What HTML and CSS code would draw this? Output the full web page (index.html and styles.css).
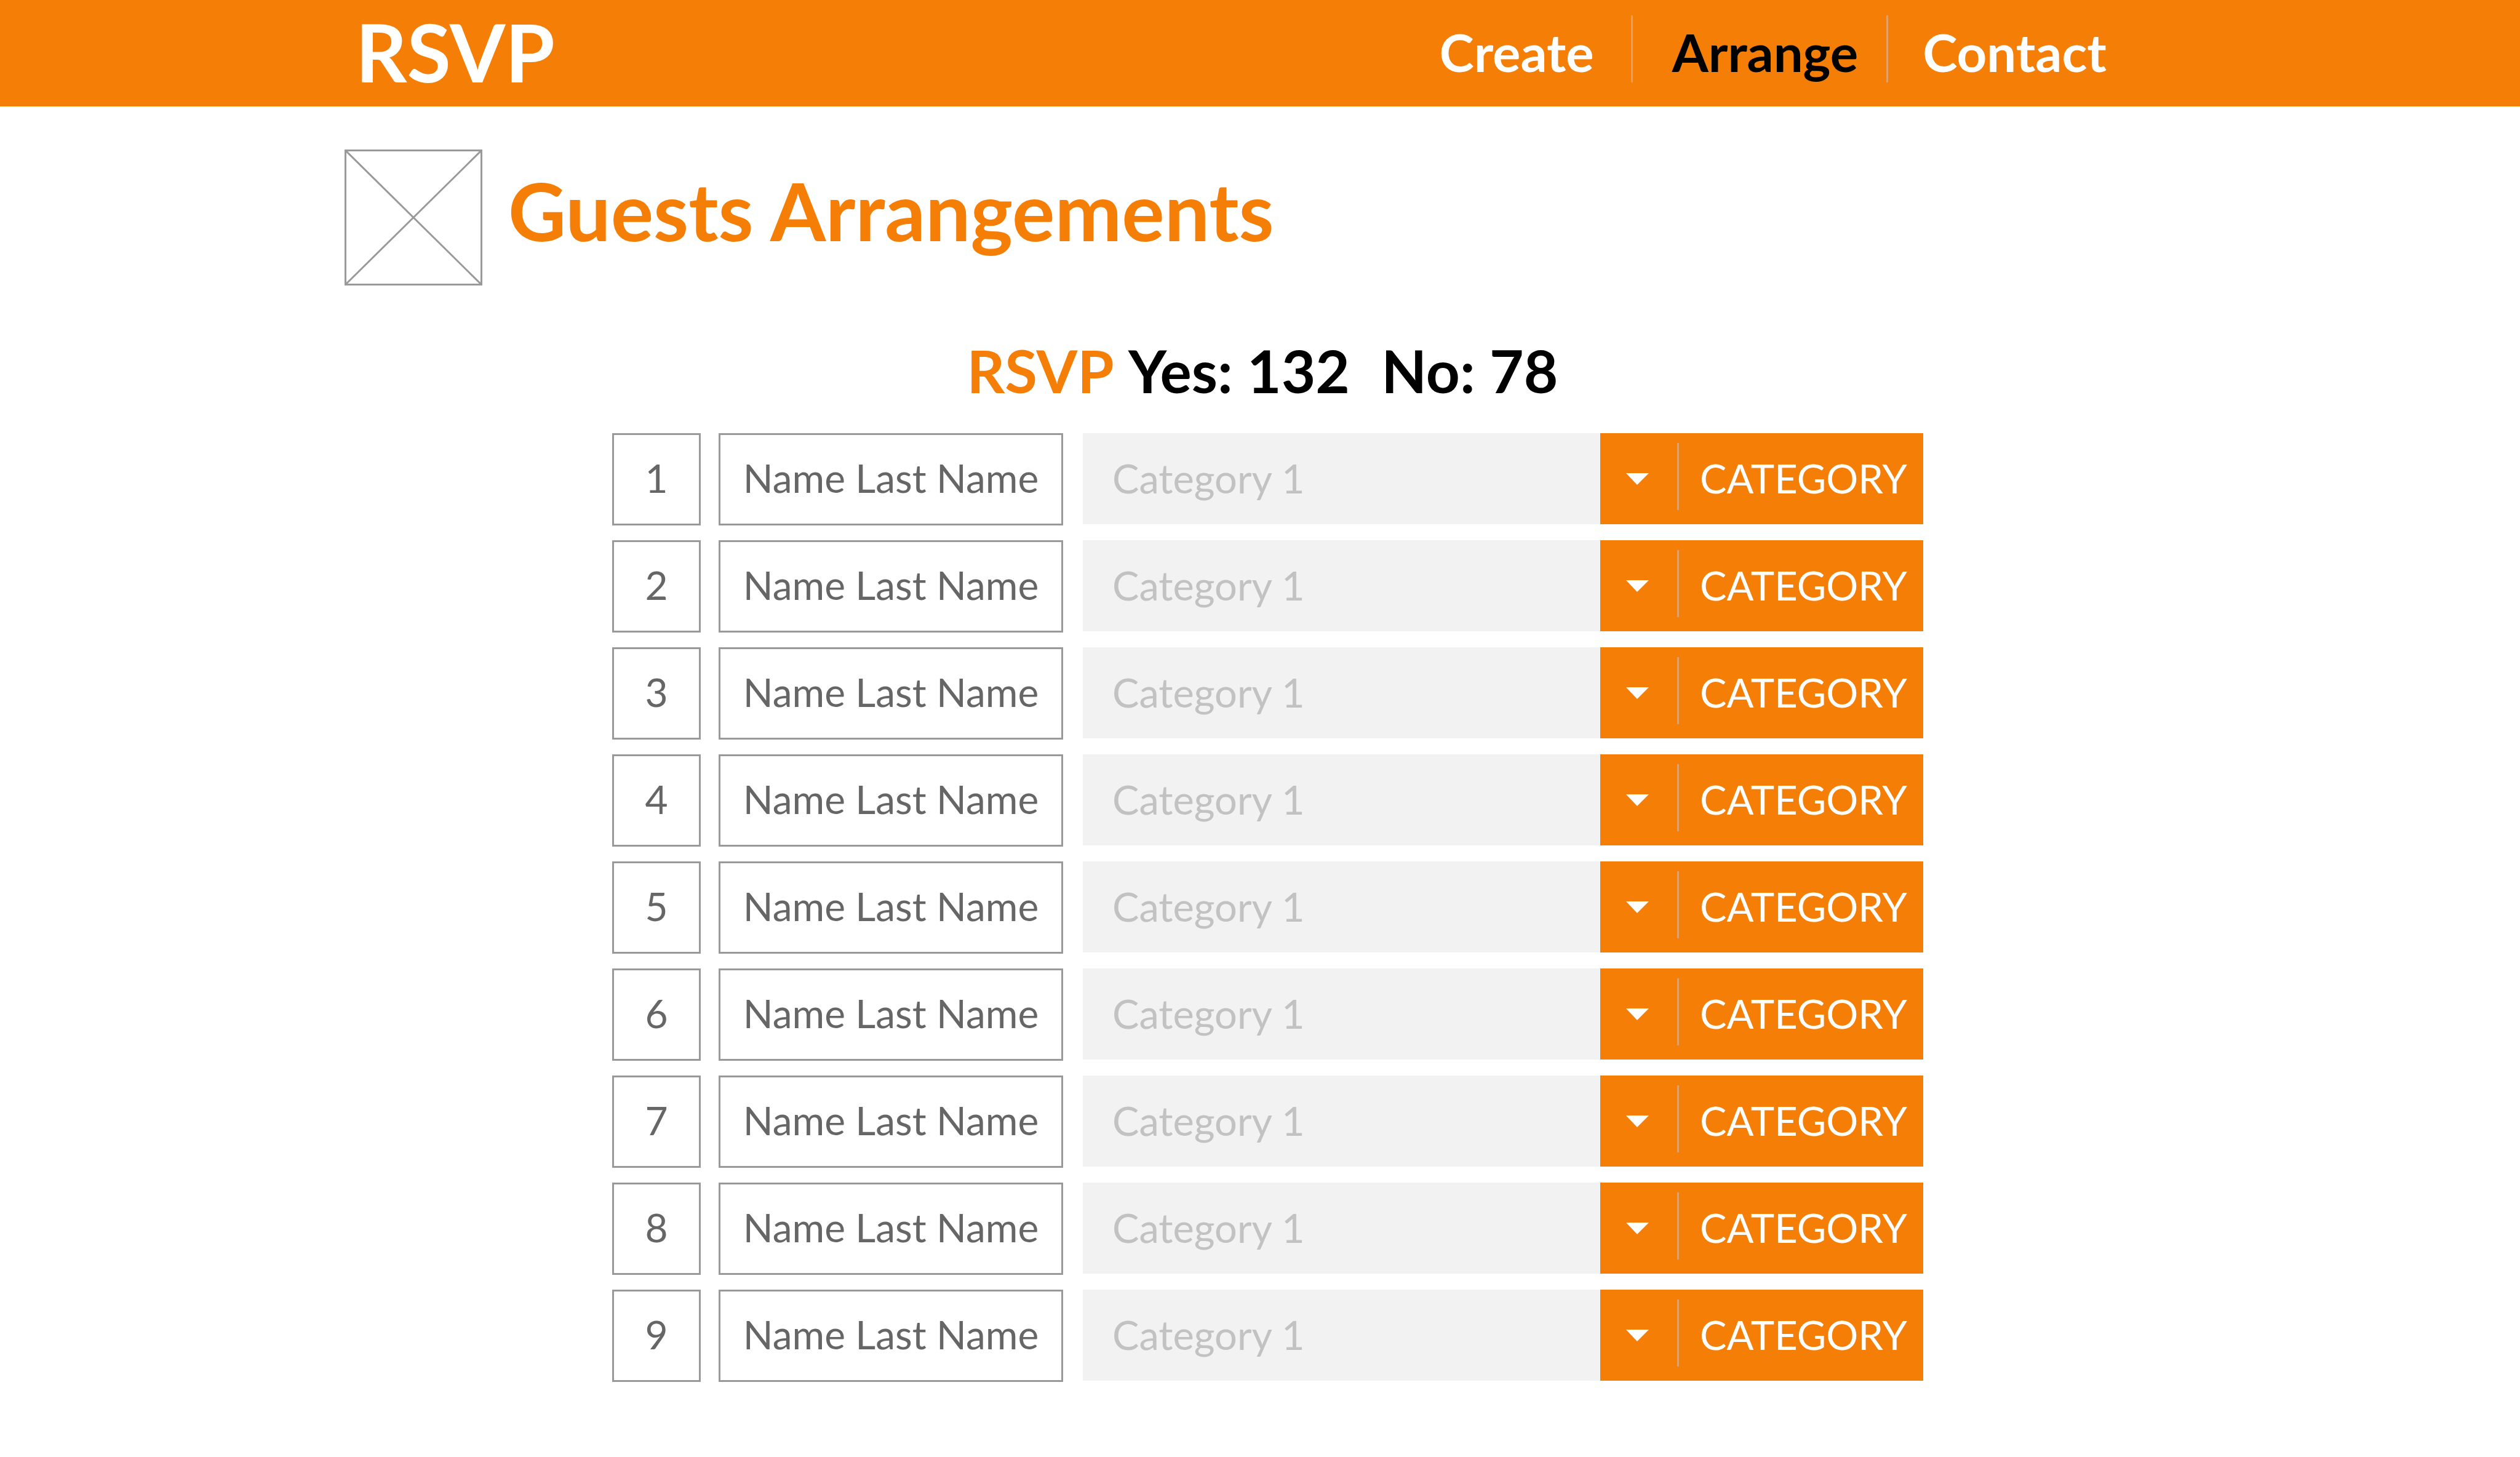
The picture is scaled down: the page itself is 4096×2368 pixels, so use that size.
FILE: index.html
```html
<!DOCTYPE html>
<html lang="en">
<head>
<meta charset="utf-8">
<meta name="viewport" content="width=device-width, initial-scale=1">
<title>RSVP – Guests Arrangements</title>
<link rel="stylesheet" href="styles.css">
</head>
<body>
<header class="topbar">
  <div class="container topbar-inner">
    <a class="logo" href="#">RSVP</a>
    <nav aria-label="Main">
      <ul class="nav">
        <li class="nav-item"><a href="#create">Create</a></li>
        <li class="nav-item nav-item-current"><a href="#arrange" aria-current="page">Arrange</a></li>
        <li class="nav-item"><a href="#contact">Contact</a></li>
      </ul>
    </nav>
  </div>
</header>
<main class="container main">
  <div class="title">
    <svg class="title-image" viewBox="0 0 224 221" aria-hidden="true">
      <rect x="1.5" y="1.5" width="221" height="218"/>
      <path d="M2 2L222 219M222 2L2 219"/>
    </svg>
    <h1>Guests Arrangements</h1>
  </div>
  <p class="summary"><span class="summary-brand">RSVP</span> Yes: 132 <span class="summary-no">No: 78</span></p>
  <ol class="guests" id="guests"></ol>
</main>
<template id="guest-row">
  <li class="guest">
    <span class="guest-number"></span>
    <span class="guest-name">Name Last Name</span>
    <div class="picker">
      <input class="picker-field" type="text" placeholder="Category 1">
      <button class="picker-button" type="button">
        <svg class="picker-arrow" viewBox="0 0 37 19" aria-hidden="true"><path d="M0 0H37L18 19Z"/></svg>
        <span class="picker-label">CATEGORY</span>
      </button>
    </div>
  </li>
</template>
<script src="guests.js"></script>
</body>
</html>
```
FILE: guests.js
```js
const list = document.getElementById('guests');
const template = document.getElementById('guest-row');

for (let n = 1; n <= 9; n++) {
  const row = template.content.cloneNode(true);
  row.querySelector('.guest-number').textContent = n;
  row.querySelector('.guest-name').id = 'guest-' + n;
  row.querySelector('.picker-field').setAttribute('aria-labelledby', 'guest-' + n);
  list.append(row);
}
```
FILE: styles.css
```css
:root {
  --orange: #f57e07;
  --divider: #e5a066;
  --line: #999;
  --text: #666;
}

* {
  box-sizing: border-box;
}

body {
  margin: 0;
  background: #fff;
  color: #000;
  font-family: Lato, sans-serif;
  font-size: 64px;
}

.container {
  max-width: 2976px;
  margin: 0 auto;
}

/* Top bar */
.topbar {
  background: var(--orange);
  padding: 25px 0 30px;
}

.topbar-inner {
  display: flex;
  justify-content: space-between;
  padding: 0 112px 0 18px;
  font-weight: 700;
  line-height: 118px;
}

.logo {
  color: #fff;
  font-size: 130px;
  text-decoration: none;
}

.nav {
  display: flex;
  margin: 0;
  padding: 0;
  list-style: none;
  font-size: 85px;
}

.nav-item {
  height: 109px;
}

.nav-item a {
  color: #fff;
  text-decoration: none;
}

.nav-item-current {
  margin: 0 56px 0 60px;
  padding: 0 46px 0 64px;
  border: solid var(--divider);
  border-width: 0 3px;
}

.nav-item-current a {
  color: #000;
}

/* Page title */
.main {
  padding: 70px 0;
}

.title {
  display: flex;
  align-items: center;
  gap: 42px;
}

.title-image {
  flex: none;
  width: 224px;
  height: 221px;
  fill: none;
  stroke: var(--line);
  stroke-width: 3;
}

.title h1 {
  margin: 0;
  padding-bottom: 24px;
  color: var(--orange);
  font-size: 130px;
  line-height: 154px;
}

.summary {
  margin: 80px 0 44px;
  padding-left: 8px;
  font-size: 96px;
  font-weight: 700;
  line-height: 116px;
  text-align: center;
}

.summary-brand {
  margin-right: 4px;
  color: var(--orange);
}

.summary-no {
  margin-left: 28px;
}

/* Guest list */
.guests {
  display: flex;
  flex-direction: column;
  gap: 24px;
  margin: 0;
  padding: 0 410px 0 435px;
  list-style: none;
}

.guest {
  display: flex;
  align-items: flex-start;
}

.guest-number,
.guest-name {
  display: flex;
  flex: none;
  align-items: center;
  justify-content: center;
  height: 150px;
  padding-bottom: 6px;
  border: 3px solid var(--line);
  color: var(--text);
}

.guest-number {
  width: 144px;
  margin-right: 29px;
}

.guest-name {
  width: 560px;
  margin-right: 32px;
}

.picker {
  display: flex;
  flex: 1;
  min-width: 0;
  height: 148px;
  font-size: 65px;
}

.picker-field {
  flex: 1;
  min-width: 0;
  padding: 0 48px 2px;
  border: 0;
  border-radius: 0;
  background: #f2f2f2;
  color: var(--text);
  font: inherit;
}

.picker-field::placeholder {
  color: #c2c2c2;
  opacity: 1;
}

.picker-button {
  display: flex;
  flex: none;
  align-items: center;
  width: 525px;
  padding: 0 0 0 42px;
  border: 0;
  background: var(--orange);
  color: #fff;
  font: inherit;
}

.picker-arrow {
  width: 37px;
  height: 19px;
  fill: currentColor;
}

.picker-label {
  height: 109px;
  margin: 0 0 7px 46px;
  padding-left: 34px;
  border-left: 3px solid var(--divider);
  line-height: 114px;
}
```
